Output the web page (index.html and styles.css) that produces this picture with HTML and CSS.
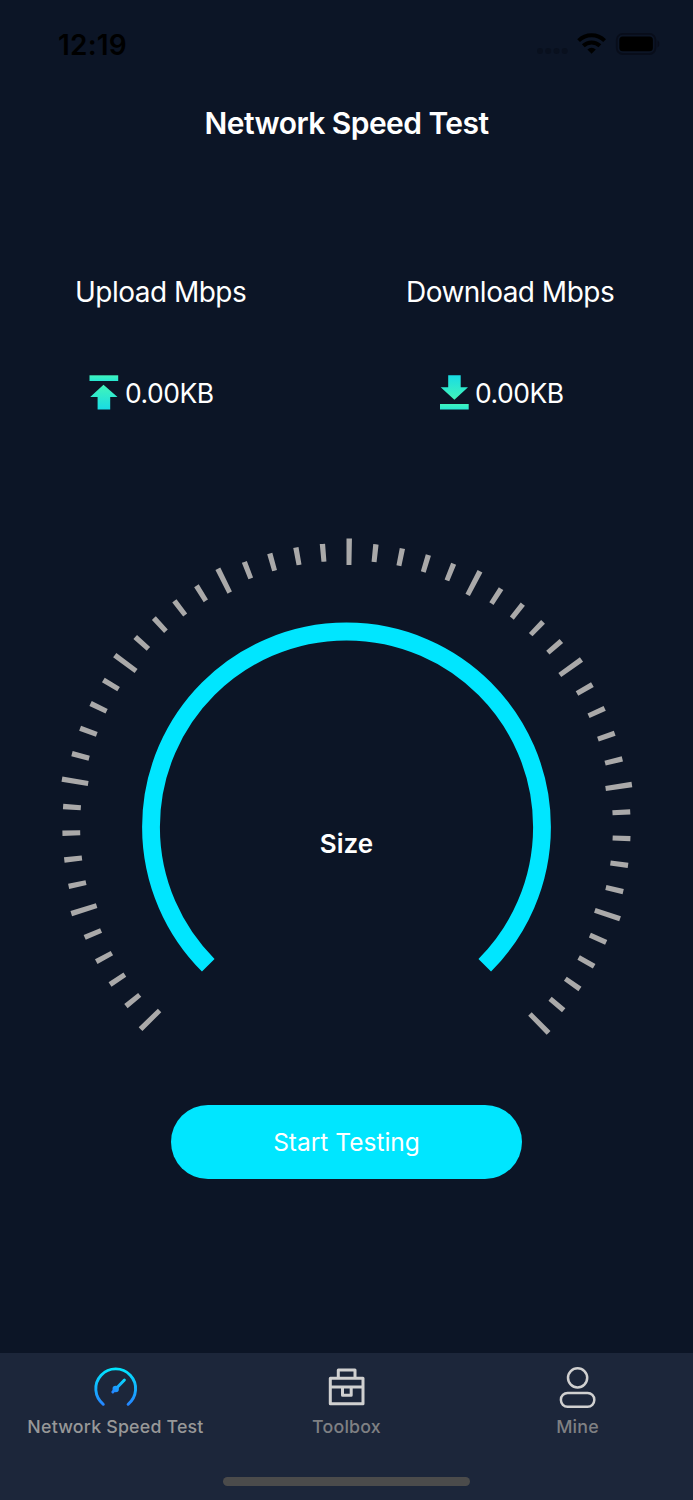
FILE: index.html
```
<!doctype html>
<html lang="en">
<head>
  <meta charset="utf-8">
  <title>Network Speed Test</title>
  <link rel="stylesheet" href="styles.css">
</head>
<body>
  <header class="status-bar">
    <span class="time">12:19</span>
    <svg class="status-icons" width="124" height="24" viewBox="0 0 124 24">
      <g fill="#09101e">
        <circle cx="4" cy="19" r="3"/>
        <circle cx="12.200" cy="19" r="3"/>
        <circle cx="20.500" cy="19" r="3"/>
        <circle cx="28.700" cy="19" r="3"/>
      </g>
      <path d="M55.600 21.800l-4.200-4.300a6.200 6.200 0 0 1 8.400 0z"/>
      <g fill="none" stroke="#000" stroke-width="4">
        <path d="M47.300 13.800a12 12 0 0 1 16.600 0"/>
        <path d="M42.600 8.600a18.700 18.700 0 0 1 26 0"/>
      </g>
      <rect x="80.800" y="1.800" width="38.600" height="20.200" rx="6" fill="none" stroke="#080d1a" stroke-width="1.800"/>
      <rect x="83.300" y="4.500" width="33.600" height="14.800" rx="3.500"/>
      <path d="M121.500 8.600c2.400 1 2.400 5.800 0 6.800z" fill="#080d1a"/>
    </svg>
  </header>

  <h1 class="title">Network Speed Test</h1>

  <main>
    <section class="speeds">
      <div class="speed upload">
        <h2>Upload Mbps</h2>
        <p>
          <svg width="30" height="36" viewBox="0 0 30 36">
            <defs>
              <linearGradient id="up" x1="0" y1="0" x2="0" y2="1">
                <stop offset="0" stop-color="#42f5b9"/>
                <stop offset="1" stop-color="#18dce4"/>
              </linearGradient>
              <linearGradient id="bar" x1="0" y1="0" x2="0" y2="1">
                <stop offset="0" stop-color="#3ff4bd"/>
                <stop offset="1" stop-color="#28e7d2"/>
              </linearGradient>
            </defs>
            <path d="M.500 1.300h28.700v5.700H.500z" fill="url(#bar)"/>
            <path d="M14.500 10.800l14 12.300h-7.300v12.400H8.600V23.100H1.200z" fill="url(#up)"/>
          </svg>
          <span>0.00KB</span>
        </p>
      </div>
      <div class="speed download">
        <h2>Download Mbps</h2>
        <p>
          <svg width="30" height="36" viewBox="0 0 30 36">
            <defs>
              <linearGradient id="down" x1="0" y1="0" x2="0" y2="1">
                <stop offset="0" stop-color="#18dce4"/>
                <stop offset="1" stop-color="#42f5b9"/>
              </linearGradient>
            </defs>
            <path d="M9.200 1.300h12.500v12H29L15.400 25.700 1.700 13.300h7.500z" fill="url(#down)"/>
            <path d="M1 30h28.700v5.500H1z" fill="url(#bar)"/>
          </svg>
          <span>0.00KB</span>
        </p>
      </div>
    </section>

    <section class="gauge">
      <svg width="581" height="498" viewBox="-.5 0 581 498" fill="none">
        <!-- 51 ticks, one every 5.4deg, every fifth is long -->
        <g stroke="#aaa9a9">
          <path class="ticks" pathLength="271.08" d="M95.370 484.630A275.250 275.250 0 1 1 480.920 488.270"/>
          <path class="ticks long" pathLength="271.08" d="M95.370 484.630A275.250 275.250 0 1 1 480.920 488.270"/>
        </g>
        <path class="ring" d="M151.760 428.240A195.500 195.500 0 1 1 428.240 428.240"/>
      </svg>
      <span class="gauge-label">Size</span>
    </section>

    <button class="start">Start Testing</button>
  </main>

  <nav class="tab-bar">
    <a class="tab active">
      <svg width="46" height="44" viewBox="0 0 46 44" fill="none" stroke="url(#meter)" stroke-linecap="round">
        <defs>
          <linearGradient id="meter" gradientUnits="userSpaceOnUse" x1="0" y1="3" x2="0" y2="41">
            <stop offset="0" stop-color="#00e8ff"/>
            <stop offset="1" stop-color="#2682ff"/>
          </linearGradient>
          <linearGradient id="needle" gradientUnits="userSpaceOnUse" x1="32" y1="14" x2="20" y2="27">
            <stop offset="0" stop-color="#06dfff"/>
            <stop offset="1" stop-color="#2485ff"/>
          </linearGradient>
        </defs>
        <path d="M10.300 39.300A19.900 19.900 0 1 1 35.100 39.300" stroke-width="2.900"/>
        <path d="M19.800 27L31.400 15.100" stroke="url(#needle)" stroke-width="2.900"/>
        <circle cx="22.700" cy="24" r="3.200" fill="url(#needle)" stroke="none"/>
      </svg>
      <span>Network Speed Test</span>
    </a>
    <a class="tab">
      <svg width="46" height="44" viewBox="0 0 46 44" fill="none" stroke="#d0d0d0" stroke-width="3" stroke-linejoin="round">
        <path d="M6.300 13.300h32.700v25.400H6.300zM14.300 13V5h16.700v8M6.300 22h32.700M18.500 22.500v7.800h8.700v-7.800"/>
      </svg>
      <span>Toolbox</span>
    </a>
    <a class="tab">
      <svg width="46" height="44" viewBox="0 0 46 44" fill="none" stroke="#d0d0d0" stroke-width="2.500">
        <circle cx="22.600" cy="12.800" r="9.600"/>
        <rect x="5.900" y="28" width="33.400" height="13.800" rx="6.700"/>
      </svg>
      <span>Mine</span>
    </a>
    <div class="home-indicator"></div>
  </nav>
</body>
</html>
```

FILE: styles.css
```
* {
  box-sizing: border-box;
}

body {
  display: flex;
  flex-direction: column;
  width: 693px;
  height: 1500px;
  margin: 0;
  background: #0c1526;
  color: #fff;
  font-family: Inter, "Liberation Sans", sans-serif;
}

h1, h2, p {
  margin: 0;
}

.status-bar {
  display: flex;
  justify-content: space-between;
  height: 84px;
  padding: 32px 33px 0 58px;
  color: #000;
}

.time {
  font-size: 28px;
  line-height: 26px;
  font-weight: 600;
  letter-spacing: .2px;
}

.title {
  height: 78px;
  font-size: 30px;
  line-height: 78px;
  font-weight: 600;
  letter-spacing: -.55px;
  text-align: center;
}

main {
  display: flex;
  flex-direction: column;
  align-items: center;
  height: 1191px;
}

/* Upload / download */
.speeds {
  display: flex;
  width: 100%;
  height: 375px;
  padding-top: 112px;
}

.speed h2 {
  font-size: 28px;
  line-height: 36px;
  font-weight: 400;
  letter-spacing: -.52px;
  white-space: nowrap;
}

.upload {
  width: 332px;
  padding-left: 75px;
}

.download {
  padding-left: 74px;
}

.speed p {
  display: flex;
  align-items: center;
  gap: 6px;
  margin-top: 64px;
  padding-left: 14px;
  font-size: 26.5px;
  line-height: 36px;
  letter-spacing: -.5px;
}

.speed p span {
  padding-top: 2px;
}

.speed p svg {
  flex: none;
  height: 36px;
}

.speed p {
  height: 36px;
}

.download p {
  padding-left: 33px;
}

/* Gauge */
.gauge {
  position: relative;
  height: 498px;
}

/* zero-length dash leaves a hole where the long tick goes */
.ticks {
  stroke-width: 17.8px;
  stroke-dasharray: 0 5.4 1.08 4.32 1.08 4.32 1.08 4.32 1.08 4.32;
}

.ticks.long {
  stroke-width: 26.6px;
  stroke-dasharray: 1.08 25.92;
}

.ring {
  stroke: #00e6ff;
  stroke-width: 17.8px;
}

.gauge-label {
  position: absolute;
  top: 289px;
  left: 0;
  width: 100%;
  font-size: 26px;
  line-height: 36px;
  font-weight: 600;
  text-align: center;
}

.start {
  width: 351px;
  height: 74px;
  margin-top: 69.5px;
  padding: 0;
  border: 0;
  border-radius: 37px;
  background: #00e6ff;
  color: #fff;
  font: 400 24.5px/74px Inter, "Liberation Sans", sans-serif;
}

/* Tab bar */
.tab-bar {
  display: grid;
  grid-template-columns: repeat(3, 1fr);
  grid-template-rows: 124px 9px;
  height: 147px;
  background: #1c263a;
}

.tab {
  display: flex;
  flex-direction: column;
  align-items: center;
  padding-top: 12px;
  color: #7f8083;
  font-size: 17.8px;
  line-height: 24px;
  font-weight: 500;
  letter-spacing: .2px;
}

.tab span {
  margin-top: 6px;
}

.tab.active {
  color: #989898;
}

.home-indicator {
  grid-column: 1 / -1;
  justify-self: center;
  width: 247px;
  border-radius: 5px;
  background: #4b4b4b;
}
```
